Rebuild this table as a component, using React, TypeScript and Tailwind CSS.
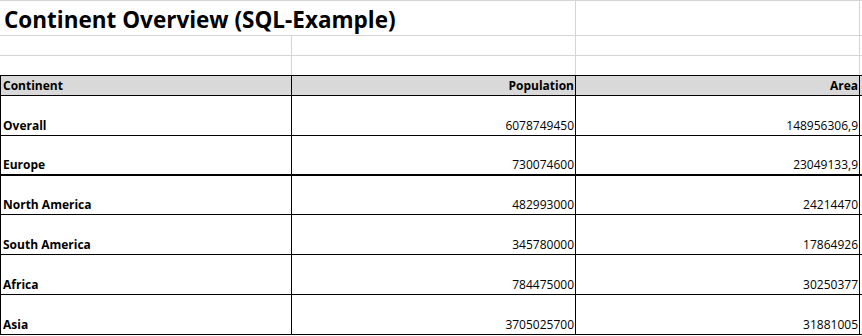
import React from "react";

const rows = [
  { name: "Overall", pop: "6078749450", area: "148956306,9", h: "h-[40px]", thick: false },
  { name: "Europe", pop: "730074600", area: "23049133,9", h: "h-[40px]", thick: true },
  { name: "North America", pop: "482993000", area: "24214470", h: "h-[39px]", thick: false },
  { name: "South America", pop: "345780000", area: "17864926", h: "h-[40px]", thick: false },
  { name: "Africa", pop: "784475000", area: "30250377", h: "h-[40px]", thick: false },
  { name: "Asia", pop: "3705025700", area: "31881005", h: "h-[40px]", thick: false },
];

export default function App() {
  return (
    <div
      className="w-[862px] h-[336px] bg-white text-black overflow-hidden"
      style={{ fontFamily: "'Open Sans', 'Noto Sans', sans-serif" }}
    >
      {/* Title row */}
      <div className="flex h-[36px] border-t border-b border-[#d4d4d4]">
        <div className="w-[576px] border-r border-[#d4d4d4] flex items-end pl-[4px] pb-[4px] text-[22.5px] font-bold leading-none whitespace-nowrap">
          <span>Continent Overview (SQL-Example)</span>
        </div>
        <div className="w-[284px] border-r border-[#d4d4d4]" />
      </div>
      {/* Empty rows */}
      <div className="flex h-[20px] border-b border-[#d4d4d4]">
        <div className="w-[292px] border-r border-[#d4d4d4]" />
        <div className="w-[284px] border-r border-[#d4d4d4]" />
        <div className="w-[284px] border-r border-[#d4d4d4]" />
      </div>
      <div className="flex h-[19px]">
        <div className="w-[292px] border-r border-[#d4d4d4]" />
        <div className="w-[284px] border-r border-[#d4d4d4]" />
        <div className="w-[284px] border-r border-[#d4d4d4]" />
      </div>
      {/* Header */}
      <div className="flex h-[21px] border-t border-b border-black bg-[#d9d9d9] text-[12px] font-bold leading-none">
        <div className="w-[292px] border-l border-r border-black flex items-end pl-[2px] pb-[3px]">Continent</div>
        <div className="w-[284px] border-r border-black flex items-end justify-end pr-[1px] pb-[3px]">Population</div>
        <div className="w-[284px] border-r border-black flex items-end justify-end pr-[1px] pb-[3px]">Area</div>
      </div>
      {rows.map((r) => (
        <div
          key={r.name}
          className={`flex ${r.h} ${r.thick ? "border-b-2" : "border-b"} border-black text-[12px] leading-none`}
        >
          <div className="w-[292px] border-l border-r border-black flex items-end pl-[2px] pb-[3px] font-bold">{r.name}</div>
          <div className="w-[284px] border-r border-black flex items-end justify-end pr-[1px] pb-[3px]">{r.pop}</div>
          <div className="w-[284px] border-r border-black flex items-end justify-end pr-[1px] pb-[3px]">{r.area}</div>
        </div>
      ))}
    </div>
  );
}
